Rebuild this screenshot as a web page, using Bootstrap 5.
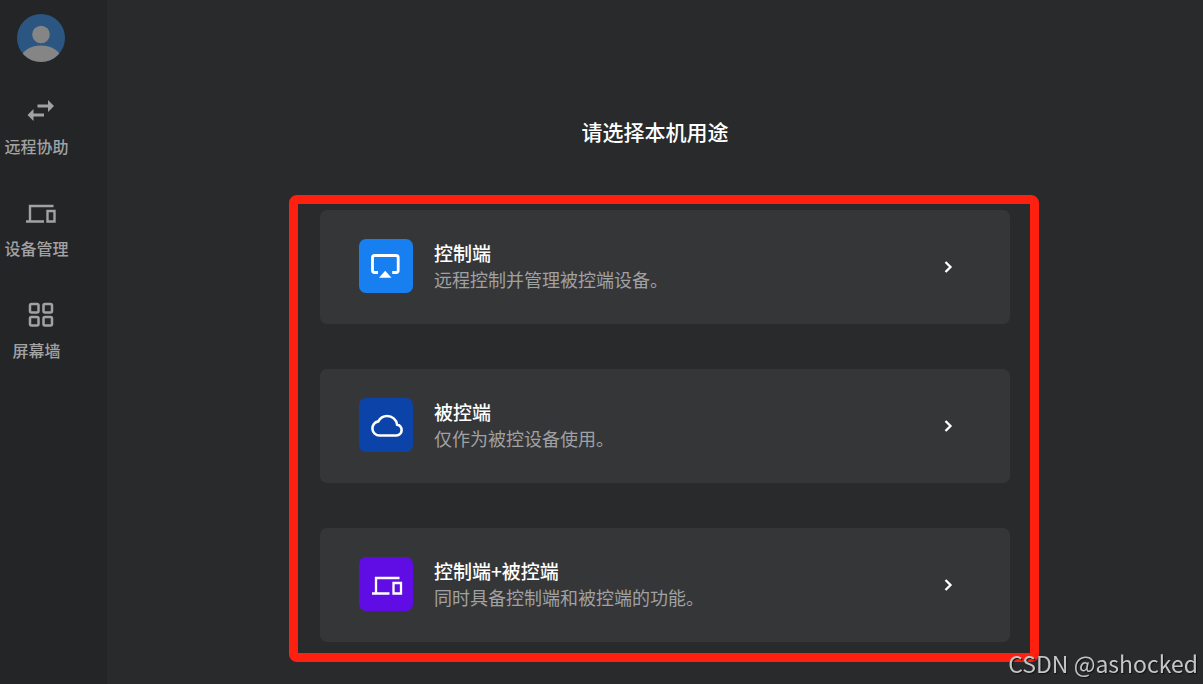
<!DOCTYPE html>
<html lang="zh-CN" data-bs-theme="dark">
<head>
<meta charset="utf-8">
<meta name="viewport" content="width=device-width, initial-scale=1">
<title>请选择本机用途</title>
<link href="https://cdn.jsdelivr.net/npm/bootstrap@5.3.0/dist/css/bootstrap.min.css" rel="stylesheet">
<style>
body { background: #292a2c; color: #fff; font-family: "Noto Sans CJK SC", sans-serif; }
.sidebar { width: 107px; background: #242527; padding: 14px 34px 0 0; }
.avatar { width: 48px; height: 48px; margin: 0 0 30px 17px; }
.side-link { color: #a2a2a3; font-size: 16px; line-height: 24px; font-weight: 500; height: 102px; white-space: nowrap; }
.side-link svg { width: 32px; height: 32px; margin: 3px 0 7px 8px; }
.side-link:hover { color: #fff; }
.page-title { font-size: 21px; line-height: 32px; font-weight: 500; margin: 115px 0 48px; }
.frame-wrap { padding-left: 18px; }
.frame { max-width: 750px; border: 9px solid #ff2010; border-radius: 8px; padding: 6px 20px 11px 22px; gap: 45px; }
.choice { background: #353638; border-radius: 7px; min-height: 114px; padding: 0 54px 0 39px; gap: 21px; color: #fff; }
.choice:hover { background: #3b3c3e; }
.tile { width: 54px; height: 54px; border-radius: 7px; margin-bottom: 3px; }
.tile-blue { background: #187ff0; }
.tile-navy { background: #0b43a8; }
.tile-violet { background: #600ce4; }
.choice-label { padding-bottom: 2px; }
.choice-name { font-size: 19px; line-height: 26px; font-weight: 500; }
.choice-text { font-size: 18px; line-height: 26px; color: #a0a1a2; }
.watermark { right: 5px; bottom: 5px; font-size: 23px; line-height: 32px; color: #c4c5c6; text-shadow: 1px 1px 1px #111; }
</style>
</head>
<body>
<div class="d-flex min-vh-100">
  <nav class="sidebar flex-shrink-0 d-flex flex-column" aria-label="主导航">
    <svg class="avatar" viewBox="0 0 48 48" role="img" aria-label="头像"><defs><clipPath id="face"><circle cx="24" cy="24" r="24"/></clipPath></defs><g clip-path="url(#face)"><path fill="#2b5682" d="M0 0h48v48H0z"/><circle cx="24" cy="20.500" r="8.800" fill="#858585"/><ellipse cx="24" cy="45" rx="20" ry="13.500" fill="#858585"/></g></svg>
    <a href="#" class="side-link d-flex flex-column align-items-center text-decoration-none">
      <svg viewBox="0 0 32 32" fill="currentColor" aria-hidden="true"><path d="M12.500 9.600H23V5l6 6-6 6v-4.400H12.500zM19 18.600H8.500V14l-6 6 6 6v-4.400H19z"/></svg>
      <span>远程协助</span>
    </a>
    <a href="#" class="side-link d-flex flex-column align-items-center text-decoration-none">
      <svg viewBox="0 0 32 32" fill="none" stroke="currentColor" stroke-width="2.400" aria-hidden="true"><path d="M28.500 9H5v15M1 24.500h18M22.500 14h7v10.500h-7z"/></svg>
      <span>设备管理</span>
    </a>
    <a href="#" class="side-link d-flex flex-column align-items-center text-decoration-none">
      <svg viewBox="0 0 32 32" fill="none" stroke="currentColor" stroke-width="2.500" aria-hidden="true"><rect x="5" y="5" width="8.500" height="8.500" rx="1.500"/><rect x="18.500" y="5" width="8.500" height="8.500" rx="1.500"/><rect x="5" y="18" width="8.500" height="8.500" rx="1.500"/><rect x="18.500" y="18" width="8.500" height="8.500" rx="1.500"/></svg>
      <span>屏幕墙</span>
    </a>
  </nav>
  <main class="flex-grow-1">
    <h1 class="page-title text-center">请选择本机用途</h1>
    <div class="frame-wrap">
      <div class="frame mx-auto d-flex flex-column">
        <button type="button" class="choice border-0 w-100 d-flex align-items-center text-start">
          <span class="tile tile-blue flex-shrink-0"><svg width="54" height="54" viewBox="0 0 54 54" class="d-block" aria-hidden="true"><path d="M19 33.500h-3.500a2 2 0 0 1-2-2v-13a2 2 0 0 1 2-2h21.700a2 2 0 0 1 2 2v13a2 2 0 0 1-2 2h-4" fill="none" stroke="#fff" stroke-width="2.800"/><path d="M26.200 31.700l6.300 7H20z" fill="#fff"/></svg></span>
          <span class="choice-label flex-grow-1"><span class="choice-name d-block">控制端</span><span class="choice-text d-block">远程控制并管理被控端设备。</span></span>
          <svg width="16" height="16" viewBox="0 0 16 16" fill="none" stroke="#fff" stroke-width="2.300" aria-hidden="true"><path d="M5.500 3l5 5-5 5"/></svg>
        </button>
        <button type="button" class="choice border-0 w-100 d-flex align-items-center text-start">
          <span class="tile tile-navy flex-shrink-0"><svg width="54" height="54" viewBox="0 0 54 54" class="d-block" fill="none" stroke="#fff" stroke-width="2.600" aria-hidden="true"><path d="M20.500 37.500h17a5.500 5.500 0 0 0 .6-10.900C37.300 21.500 33.200 18 28.200 18c-4 0-7.200 2.100-8.900 5.400a7.100 7.100 0 0 0 1.200 14.100z"/></svg></span>
          <span class="choice-label flex-grow-1"><span class="choice-name d-block">被控端</span><span class="choice-text d-block">仅作为被控设备使用。</span></span>
          <svg width="16" height="16" viewBox="0 0 16 16" fill="none" stroke="#fff" stroke-width="2.300" aria-hidden="true"><path d="M5.500 3l5 5-5 5"/></svg>
        </button>
        <button type="button" class="choice border-0 w-100 d-flex align-items-center text-start">
          <span class="tile tile-violet flex-shrink-0"><svg width="54" height="54" viewBox="0 0 54 54" class="d-block" fill="none" stroke="#fff" stroke-width="2.300" aria-hidden="true"><path d="M40.500 21H17v15M13 36.500h17.500M34.500 26H42v10.500h-7.500z"/></svg></span>
          <span class="choice-label flex-grow-1"><span class="choice-name d-block">控制端+被控端</span><span class="choice-text d-block">同时具备控制端和被控端的功能。</span></span>
          <svg width="16" height="16" viewBox="0 0 16 16" fill="none" stroke="#fff" stroke-width="2.300" aria-hidden="true"><path d="M5.500 3l5 5-5 5"/></svg>
        </button>
      </div>
    </div>
  </main>
</div>
<div class="watermark position-fixed">CSDN @ashocked</div>
<script src="https://cdn.jsdelivr.net/npm/bootstrap@5.3.0/dist/js/bootstrap.bundle.min.js"></script>
</body>
</html>
